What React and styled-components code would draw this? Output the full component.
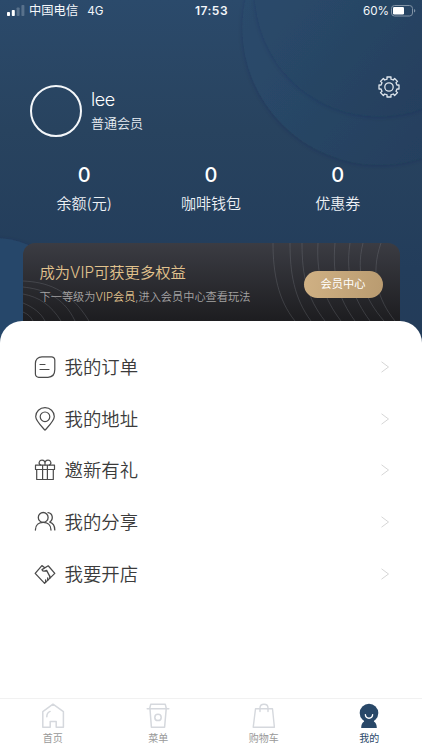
import React from 'react'
import styled, { createGlobalStyle } from 'styled-components'

const GlobalStyle = createGlobalStyle`
  * {
    box-sizing: border-box;
    margin: 0;
    padding: 0;
  }

  body {
    background: #fff;
    font-family: Inter, "Noto Sans CJK SC", sans-serif;
    overflow: hidden;
  }
`

const Page = styled.main`
  position: relative;
  width: 422px;
  height: 750px;
  display: flex;
  flex-direction: column;
  overflow: hidden;
  background: linear-gradient(180deg, #2b4a6b 0, #28435f 130px, #233d5b 270px, #233b58 370px);
`

const Backdrop = styled.svg`
  position: absolute;
  top: 0;
  left: 0;
`

const StatusBar = styled.header`
  position: relative;
  height: 22px;
  padding: 0 6px 0 7px;
  display: grid;
  grid-template-columns: 1fr auto 1fr;
  align-items: center;
  color: #f4f7fa;
  font-size: 11.7px;
  line-height: 22px;
`

const StatusSide = styled.div`
  display: flex;
  align-items: center;
  justify-content: ${props => props.$end ? 'flex-end' : 'flex-start'};
  white-space: pre;
`

const Carrier = styled.span`
  margin: 0 9px 0 4px;
  font-size: 12.3px;
`

const Clock = styled.span`
  font-size: 12px;
  font-weight: 600;
  letter-spacing: 0.5px;
`

const Battery = styled.svg`
  margin-left: 2px;
`

const Profile = styled.section`
  position: relative;
  height: 143px;
  padding: 63px 22px 0 30px;
  display: flex;
  align-items: flex-start;
`

const Avatar = styled.div`
  width: 52px;
  height: 52px;
  border: 2px solid #f4f7fa;
  border-radius: 50%;
`

const Identity = styled.div`
  margin: 2px 0 0 9px;
  flex: 1;
  color: #fff;
`

const Name = styled.h1`
  font-size: 18px;
  font-weight: 300;
  line-height: 25px;
  letter-spacing: -0.4px;
`

const Level = styled.p`
  font-size: 13px;
  font-weight: 350;
  line-height: 22px;
  color: #e9eef3;
`

const SettingsButton = styled.button`
  width: 22px;
  height: 22px;
  margin-top: -9px;
  border: none;
  background: none;
  cursor: pointer;
`

const Stats = styled.section`
  position: relative;
  height: 78px;
  padding: 0 21px;
  display: grid;
  grid-template-columns: repeat(3, 1fr);
  color: #fff;
  text-align: center;
`

const StatValue = styled.p`
  font-size: 20px;
  font-weight: 500;
  line-height: 21px;
`

const StatLabel = styled.p`
  margin-top: 6px;
  font-size: 15px;
  font-weight: 350;
  line-height: 24px;
  color: #edf1f5;
`

const VipCard = styled.section`
  position: relative;
  width: 377px;
  height: 78px;
  margin: 0 auto;
  padding: 0 17px;
  display: flex;
  justify-content: space-between;
  border-radius: 12px 12px 0 0;
  overflow: hidden;
  background: linear-gradient(180deg, #3b3c43 0%, #1d1d20 100%);
`

const CardLines = styled.svg`
  position: absolute;
  top: 0;
  left: 0;
`

const VipText = styled.div`
  position: relative;
  padding-top: 18px;
`

const VipTitle = styled.h2`
  font-size: 15.3px;
  font-weight: 350;
  line-height: 24px;
  color: #e2c38e;
`

const VipHint = styled.p`
  margin-top: 2px;
  font-size: 11.2px;
  font-weight: 350;
  line-height: 20px;
  color: #a5a4a4;

  span {
    color: #e2c38e;
  }
`

const VipButton = styled.button`
  position: relative;
  width: 79px;
  height: 27px;
  margin-top: 28px;
  border: none;
  border-radius: 14px;
  background: linear-gradient(100deg, #d0b184, #b99b70);
  color: #fff;
  font-family: inherit;
  font-size: 11.2px;
  font-weight: 400;
  line-height: 27px;
  cursor: pointer;
`

const Sheet = styled.section`
  position: relative;
  flex: 1;
  padding: 20px 30px 0 34px;
  border-radius: 22px 22px 0 0;
  background: #fff;
`

const MenuRow = styled.div`
  height: 51.7px;
  display: flex;
  align-items: center;
  color: #3b3b3b;
`

const MenuLabel = styled.span`
  flex: 1;
  margin-left: 8.5px;
  font-size: 18.4px;
  font-weight: 350;
  line-height: 26px;
`

const Arrow = styled.svg`
  margin-right: 2px;
`

const TabBar = styled.nav`
  position: relative;
  height: 52px;
  display: grid;
  grid-template-columns: repeat(4, 1fr);
  border-top: 1px solid #f1f1f1;
  background: #fff;
`

const Tab = styled.div`
  display: flex;
  flex-direction: column;
  align-items: center;
  color: ${props => props.$active ? '#294868' : '#999'};
  font-size: 10px;
  font-weight: 400;
  line-height: 14px;

  svg {
    margin: 4px 0 2px;
  }
`

const LineIcon = ({ children, size = 22, color = '#4b4b4b', width = 1.2 }) => (
  <svg width={size} height={size} viewBox={`0 0 ${size} ${size}`} fill="none" stroke={color}
    strokeWidth={width} strokeLinecap="round" strokeLinejoin="round">
    {children}
  </svg>
)

const OrderIcon = () => (
  <LineIcon>
    <path d="M8 0.8H17.5A3.3 3.3 0 0 1 20.8 4.1V13.5C20.8 18.5 18 21.3 14 21.3H4.7A3.3 3.3 0 0 1 1.4 18V7.5C1.4 3.5 4 0.8 8 0.8Z" />
    <path d="M6 8.5h5M6 13.5h9" />
  </LineIcon>
)

const PinIcon = () => (
  <LineIcon size={24}>
    <path d="M12 23.2C9.2 20 2.7 14 2.7 9.6a9.3 9 0 0 1 18.6 0C21.3 14 14.8 20 12 23.2Z" />
    <circle cx="12" cy="9.8" r="4.8" />
  </LineIcon>
)

const GiftIcon = () => (
  <LineIcon>
    <path d="M1.5 6.2h19v4.3h-19zM2.7 10.5h16.6v10H2.7zM8.6 6.2v14.3M13.4 6.2v14.3" />
    <path d="M6.6 6C3.9 4.6 5.2 1.2 8 1.2c2 0 3 1.8 3 3.4M15.4 6c2.7-1.4 1.4-4.8-1.4-4.8-2 0-3 1.8-3 3.4V6" />
  </LineIcon>
)

const FriendsIcon = () => (
  <LineIcon width={1.3}>
    <circle cx="9.2" cy="6.4" r="4.9" />
    <path d="M1.4 19C1.4 14 5 11.4 9.2 11.4S17 14 17 19" />
    <path d="M14 1.6c4.6.4 5.9 6.4 1.8 9.5 3.4 1.2 5 4 5 7.8" />
  </LineIcon>
)

const HandshakeIcon = () => (
  <LineIcon width={1.3}>
    <path d="M10.2 4.2 7.9 2.6 1.2 10.4 10.6 20.4 20.8 10.4 14.2 2.8 8 6.6c.4 2.2 2.7 1.8 4.6.8l3.2 6" />
    <path d="M11.6 19.2v-2.4M13.7 17.2v-2.4M15.8 15.2v-2" />
  </LineIcon>
)

// eight square teeth, valleys and tips joined by short radial edges
const GEAR = Array.from({ length: 8 }, (_, i) => {
  const points = [[-13.5, 8.2], [-11.5, 10.2], [11.5, 10.2], [13.5, 8.2]]
  return points.map(([offset, r]) => {
    const a = ((i * 45 + offset) * Math.PI) / 180
    return `${(11 + r * Math.sin(a)).toFixed(2)} ${(11 - r * Math.cos(a)).toFixed(2)}`
  }).join('L')
}).join('L')

const GearIcon = () => (
  <LineIcon color="#dfe6ed" width={1.3}>
    <path d={`M${GEAR}Z`} />
    <circle cx="11" cy="11" r="4.2" />
  </LineIcon>
)

const HomeIcon = () => (
  <LineIcon size={26} color="#d5d8dd" width={1.5}>
    <path d="M13 1.2 23.4 8.6V24.3H16.2V18.6H10.2V24.3H2.8V8.6Z" />
    <path d="M6.8 13.8c0-3 1-4.6 3.3-5.4" />
  </LineIcon>
)

const CupIcon = () => (
  <LineIcon size={26} color="#d5d8dd" width={1.5}>
    <path d="M2.2 5.7h21.6M4.7 5.5l1-4.2h14.6l1 4.2M5 6l1.4 18.2h13.2L21.2 6" />
    <circle cx="13" cy="14.4" r="3.2" />
  </LineIcon>
)

const BagIcon = () => (
  <LineIcon size={26} color="#d5d8dd" width={1.4}>
    <path d="M4.5 5.8h17l1.9 18.5H2.2z" />
    <path d="M9 8.5V5c0-5 8-5 8 0v3.5" />
  </LineIcon>
)

const MeIcon = () => (
  <svg width="26" height="26" viewBox="0 0 26 26">
    <circle cx="13" cy="10" r="9.3" fill="#294868" />
    <path d="M7.5 17h11l-.7 1.5c2.1 1.3 3 3.2 3 6.5H5.2c0-3.3.9-5.2 3-6.5z" fill="#294868" />
    <path d="M9.4 11.8c.4 4.5 6.8 4.5 7.2 0" fill="none" stroke="#fff" strokeWidth="1.4" strokeLinecap="round" />
  </svg>
)

const stats = [
  { value: 0, label: '余额(元)' },
  { value: 0, label: '咖啡钱包' },
  { value: 0, label: '优惠券' },
]

const menu = [
  { label: '我的订单', icon: <OrderIcon /> },
  { label: '我的地址', icon: <PinIcon /> },
  { label: '邀新有礼', icon: <GiftIcon /> },
  { label: '我的分享', icon: <FriendsIcon /> },
  { label: '我要开店', icon: <HandshakeIcon /> },
]

const tabs = [
  { label: '首页', icon: <HomeIcon /> },
  { label: '菜单', icon: <CupIcon /> },
  { label: '购物车', icon: <BagIcon /> },
  { label: '我的', icon: <MeIcon />, active: true },
]

const IconSlot = styled.span`
  width: 22px;
  height: 24px;
  display: flex;
  align-items: center;
  justify-content: center;

  svg {
    flex: none;
  }
`

export default function App() {
  return (
    <Page>
      <GlobalStyle />
      <Backdrop width="422" height="370">
        <defs>
          <linearGradient id="disc" x1="0.1" y1="0.3" x2="0.8" y2="0.9">
            <stop offset="0" stopColor="#2b4b6c" />
            <stop offset="1" stopColor="#243f5d" />
          </linearGradient>
          <filter id="soft" x="-10%" y="-10%" width="120%" height="120%">
            <feDropShadow dx="0" dy="1" stdDeviation="2.5" floodColor="#142c46" floodOpacity="0.22" />
          </filter>
        </defs>
        <circle cx="379" cy="28" r="136.5" fill="url(#disc)" filter="url(#soft)" />
        <circle cx="379" cy="-8" r="124" fill="url(#disc)" filter="url(#soft)" />
        <circle cx="-5" cy="320" r="82" fill="#27476a" filter="url(#soft)" />
      </Backdrop>

      <StatusBar>
        <StatusSide>
          <svg width="18" height="12">
            <rect x="0" y="7" width="3" height="4" rx="0.8" fill="#fff" />
            <rect x="4.8" y="5" width="3" height="6" rx="0.8" fill="#fff" />
            <rect x="9.6" y="2.5" width="3" height="8.5" rx="0.8" fill="#58718b" />
            <rect x="14.4" y="0" width="3" height="11" rx="0.8" fill="#58718b" />
          </svg>
          <Carrier>中国电信</Carrier>
          <span>4G</span>
        </StatusSide>
        <Clock>17:53</Clock>
        <StatusSide $end>
          <span>60%</span>
          <Battery width="25" height="12">
            <rect x="0.5" y="0.5" width="21" height="10.5" rx="3" fill="none" stroke="#8293a6" />
            <rect x="2" y="2" width="11" height="7.5" rx="1.3" fill="#fff" />
            <path d="M23 4v3.6c1.8-.6 1.8-3 0-3.6Z" fill="#8293a6" />
          </Battery>
        </StatusSide>
      </StatusBar>

      <Profile>
        <Avatar />
        <Identity>
          <Name>lee</Name>
          <Level>普通会员</Level>
        </Identity>
        <SettingsButton aria-label="设置">
          <GearIcon />
        </SettingsButton>
      </Profile>

      <Stats>
        {stats.map(stat => (
          <div key={stat.label}>
            <StatValue>{stat.value}</StatValue>
            <StatLabel>{stat.label}</StatLabel>
          </div>
        ))}
      </Stats>

      <VipCard>
        <CardLines width="377" height="78" fill="none" stroke="#85888f" strokeOpacity="0.28">
          <path d="M0 38C22 39 46 45 66 78M0 44C18 46 40 52 52 78M0 51C16 54 28 62 38 78M0 60C10 64 18 70 22 78M0 69C5 71 8 74 10 78" />
          <path d="M250 0C250 30 255 57 272 78M267 0C267 30 271 55 288 78M279 0C279 33 284 55 302 78M295 0C293 34 302 57 318 78M312 0C309 34 316 56 332 78M327 0C322 34 331 56 347 78M340 0C332 32 342 56 361 78M358 0C347 31 355 57 372 78" />
        </CardLines>
        <VipText>
          <VipTitle>成为VIP可获更多权益</VipTitle>
          <VipHint>下一等级为<span>VIP会员</span>,进入会员中心查看玩法</VipHint>
        </VipText>
        <VipButton>会员中心</VipButton>
      </VipCard>

      <Sheet>
        {menu.map(item => (
          <MenuRow key={item.label}>
            <IconSlot>{item.icon}</IconSlot>
            <MenuLabel>{item.label}</MenuLabel>
            <Arrow width="10" height="12" fill="none" stroke="#d6d6d6">
              <path d="M1.5 0.8 8.5 6 1.5 11.2" />
            </Arrow>
          </MenuRow>
        ))}
      </Sheet>

      <TabBar>
        {tabs.map(tab => (
          <Tab key={tab.label} $active={tab.active}>
            {tab.icon}
            {tab.label}
          </Tab>
        ))}
      </TabBar>
    </Page>
  )
}
